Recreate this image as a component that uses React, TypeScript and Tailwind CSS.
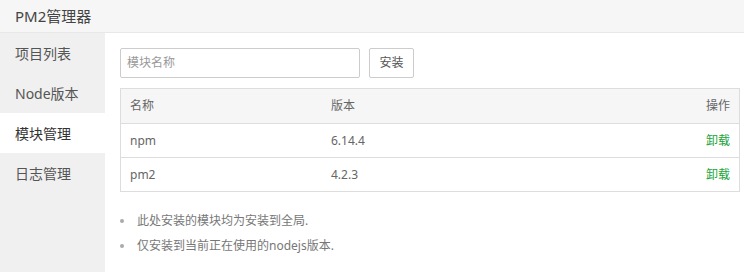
import React from "react";

export default function App() {
  const nav = ["项目列表", "Node版本", "模块管理", "日志管理"];
  const rows = [
    { name: "npm", ver: "6.14.4" },
    { name: "pm2", ver: "4.2.3" },
  ];
  return (
    <div className="w-[744px] h-[272px] bg-white overflow-hidden flex flex-col font-['Noto_Sans','Noto_Sans_CJK_SC',sans-serif]">
      <div className="h-[33px] shrink-0 bg-[#f6f6f6] border-b border-[#e8e8e8] flex items-center pl-[15px] text-[15px] text-[#444]">
        PM2管理器
      </div>
      <div className="flex flex-1 min-h-0">
        <div className="w-[105px] shrink-0 bg-[#f0f0f0] flex flex-col">
          {nav.map((n, i) => (
            <div
              key={n}
              className={
                i === 2
                  ? "h-10 flex items-center pl-[15px] text-[14px] text-[#333] bg-white"
                  : "h-10 flex items-center pl-[15px] text-[14px] text-[#555]"
              }
            >
              {n}
            </div>
          ))}
        </div>
        <div className="flex-1 pt-[15px] pl-[15px] pr-[4px]">
          <div className="flex items-center">
            <div className="w-[240px] h-[30px] border border-[#ccc] rounded-[2px] flex items-center pl-[6px] text-[12px] text-[#999]">
              模块名称
            </div>
            <div className="ml-[9px] w-[45px] h-[30px] border border-[#ccc] rounded-[2px] flex items-center justify-center text-[12px] text-[#555]">
              安装
            </div>
          </div>
          <div className="mt-[10px] border border-[#ddd] text-[12px] text-[#666]">
            <div className="h-[34px] bg-[#f6f6f6] flex items-center">
              <div className="w-[201px] pl-[9px]">名称</div>
              <div className="flex-1 pl-[9px]">版本</div>
              <div className="pr-[9px]">操作</div>
            </div>
            {rows.map((r) => (
              <div key={r.name} className="h-[34px] border-t border-[#ddd] flex items-center">
                <div className="w-[201px] pl-[9px]">{r.name}</div>
                <div className="flex-1 pl-[9px]">{r.ver}</div>
                <div className="pr-[9px] text-[#20a53a]">卸载</div>
              </div>
            ))}
          </div>
          <ul className="mt-[16px] text-[12px] text-[#777]">
            <li className="h-[25px] flex items-center">
              <span className="w-[4px] h-[4px] rounded-full bg-[#aaa] mr-[13px]" />
              此处安装的模块均为安装到全局.
            </li>
            <li className="h-[25px] flex items-center">
              <span className="w-[4px] h-[4px] rounded-full bg-[#aaa] mr-[13px]" />
              仅安装到当前正在使用的nodejs版本.
            </li>
          </ul>
        </div>
      </div>
    </div>
  );
}
